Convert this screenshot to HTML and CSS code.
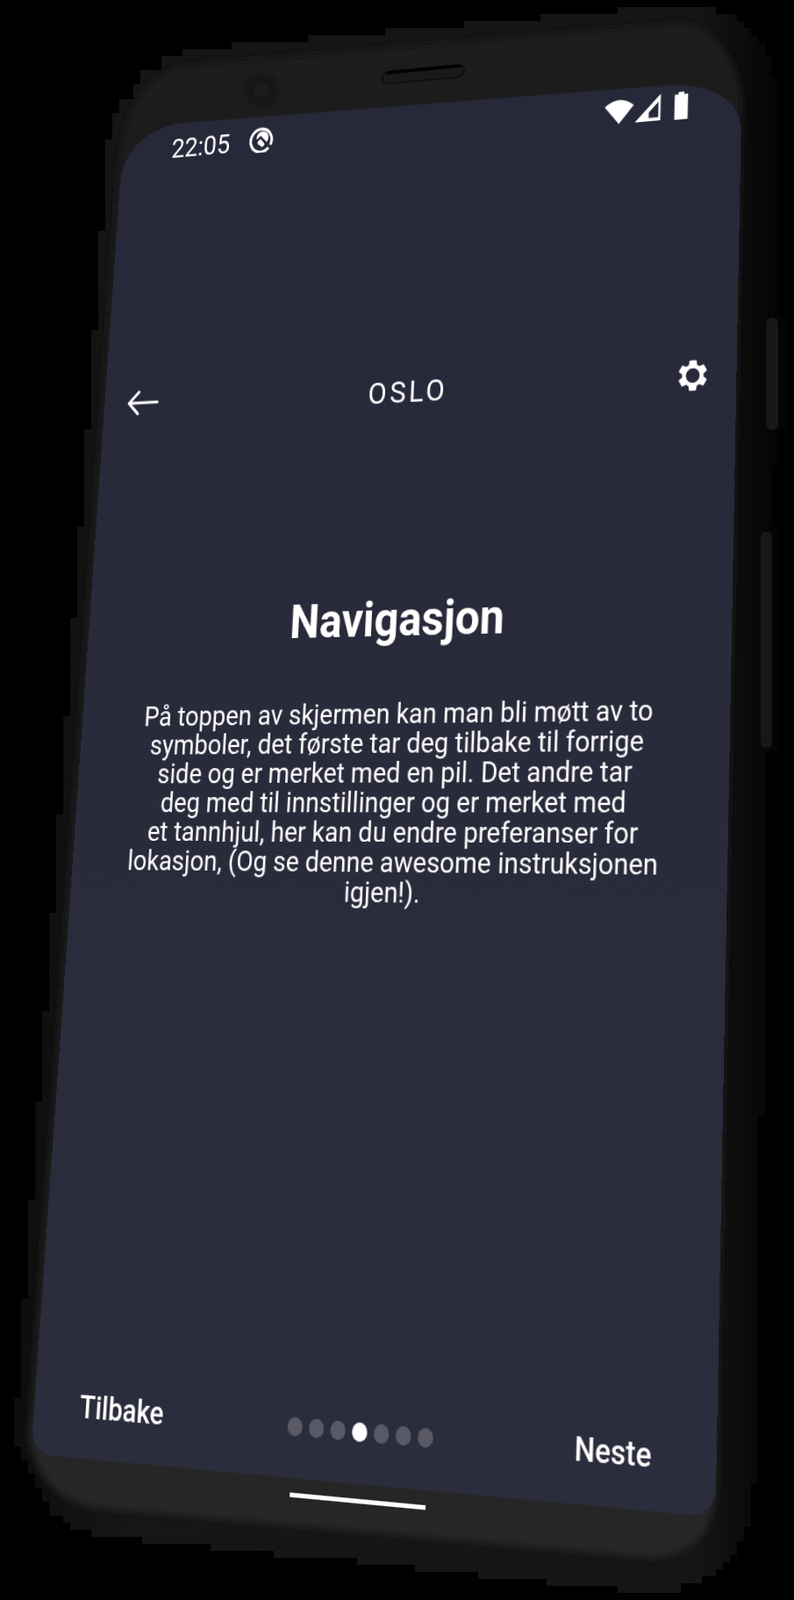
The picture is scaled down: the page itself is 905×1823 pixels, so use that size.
FILE: index.html
```html
<!DOCTYPE html>
<html lang="no">
<head>
    <meta charset="UTF-8">
    <meta name="viewport" content="width=device-width, initial-scale=1.0">
    <title>Oslo - Navigasjon</title>
    <link rel="stylesheet" href="styles.css">
</head>
<body>
    <div class="stage">
        <!-- phone body -->
        <svg class="phone" width="905" height="1823" viewBox="0 0 905 1823" aria-hidden="true">
            <defs>
                <linearGradient id="sideShade" gradientUnits="userSpaceOnUse" x1="0" y1="0" x2="905" y2="0">
                    <stop offset="0" stop-color="#0c0c0c"/>
                    <stop offset="0.16" stop-color="#161616"/>
                    <stop offset="0.88" stop-color="#151515"/>
                    <stop offset="0.98" stop-color="#040404"/>
                </linearGradient>
                <linearGradient id="faceShade" gradientUnits="userSpaceOnUse" x1="0" y1="0" x2="0" y2="1823">
                    <stop offset="0" stop-color="#1a1a1a"/>
                    <stop offset="0.6" stop-color="#1c1c1c"/>
                    <stop offset="1" stop-color="#282828"/>
                </linearGradient>
                <filter id="soft" x="-5%" y="-5%" width="110%" height="110%">
                    <feGaussianBlur stdDeviation="4"/>
                </filter>
                <filter id="softer" x="-30%" y="-30%" width="160%" height="160%">
                    <feGaussianBlur stdDeviation="1.5"/>
                </filter>
            </defs>
            <path fill="url(#sideShade)" d="M184 64H208V56H264V48H351V40H439V32H529V24H616V16H704V8H816V16H840V24H848V32H856V40H864V48H872V64H880V88H888V360H897V488H888V530H880V600H888V856H872V1271H864V1690H856V1740H848V1756H840V1772H832V1780H824V1788H816V1796H800V1804H776V1815H704V1807H623V1799H545V1791H473V1783H407V1775H312V1767H240V1759H162V1751H104V1743H80V1735H72V1727H56V1711H48V1695H40V1679H32V1664H24V1648H16V1593H24V1480H32V1367H40V1255H48V1152H56V1040H64V928H72V816H80V704H88V600H96V489H104V376H112V263H120V159H128V129H136V113H152V96H160V80H184Z"/>
            <path fill="url(#faceShade)" filter="url(#soft)" d="M134 210C140 125 160 92 208 75L767 27C802 25 832 45 846 110L816 1700C812 1750 790 1770 744 1775L110 1718C70 1712 45 1690 33 1640Z"/>
            <rect class="side-key" x="873" y="362" width="14" height="128" rx="7"/>
            <rect class="side-key" x="867" y="606" width="13" height="246" rx="6"/>
            <g filter="url(#softer)">
                <circle cx="298" cy="103" r="19" fill="#121212"/>
                <circle cx="298" cy="102" r="9" fill="#1c1c1c"/>
            </g>
            <path fill="#191919" stroke="#0d0d0d" stroke-width="1.5" d="M444 81L522 74C528 74 530 78 529 81C528 85 526 87 522 88L444 95C438 95 436 92 436 89C437 85 439 82 444 81Z"/>
            <path fill="none" stroke="#020202" stroke-width="3.5" stroke-linecap="round" d="M442 83L524 75"/>
        </svg>

        <!-- device screen, tilted with a matrix3d in styles.css -->
        <div class="screen">
            <div class="app">
                <div class="statusbar">
                    <span class="clock">22:05</span>
                    <svg class="q-icon" viewBox="0 0 24 24">
                        <path fill="none" stroke="#fff" stroke-width="2.6" d="M19.5 20A10.5 10.5 0 1 1 21.2 17.5"/>
                        <circle cx="13" cy="10.5" r="6" fill="#fff"/>
                        <path fill="none" stroke="#272839" stroke-width="2.2" d="M4.5 15.5L11 10L18 17"/>
                        <path fill="#fff" d="M8 15.5L11 12.5L15.5 17L13 19Z"/>
                    </svg>
                    <div class="status-icons">
                        <svg class="wifi" viewBox="0 0 24 24"><path fill="#fff" d="M12 22.5L0 8.5C7 2 17 2 24 8.5Z"/></svg>
                        <svg class="signal" viewBox="0 0 24 24"><path fill="#fff" fill-rule="evenodd" d="M24 0V24H0ZM22 7L13 16V21H22Z"/></svg>
                        <svg class="battery" viewBox="0 0 12 24"><path fill="#fff" d="M3.5 0H8.5V2H12V24H0V2H3.5Z"/></svg>
                    </div>
                </div>

                <div class="topbar">
                    <svg class="back" viewBox="0 0 38 28">
                        <path fill="none" stroke="#fff" stroke-width="3" stroke-linecap="round" stroke-linejoin="round" d="M36 14H3M14 3L3 14L14 25"/>
                    </svg>
                    <span class="city">OSLO</span>
                    <svg class="gear" viewBox="0 0 24 24">
                        <path fill="#fff" d="M19.14 12.94c.04-.3.06-.61.06-.94 0-.32-.02-.64-.07-.94l2.03-1.58c.18-.14.23-.41.12-.61l-1.92-3.32c-.12-.22-.37-.29-.59-.22l-2.39.96c-.5-.38-1.03-.7-1.62-.94l-.36-2.54c-.04-.24-.24-.41-.48-.41h-3.84c-.24 0-.43.17-.47.41l-.36 2.54c-.59.24-1.13.57-1.62.94l-2.39-.96c-.22-.08-.47 0-.59.22L2.74 8.87c-.12.21-.08.47.12.61l2.03 1.58c-.05.3-.09.63-.09.94s.02.64.07.94l-2.03 1.58c-.18.14-.23.41-.12.61l1.92 3.32c.12.22.37.29.59.22l2.39-.96c.5.38 1.03.7 1.62.94l.36 2.54c.05.24.24.41.48.41h3.84c.24 0 .44-.17.47-.41l.36-2.54c.59-.24 1.13-.56 1.62-.94l2.39.96c.22.08.47 0 .59-.22l1.92-3.32c.12-.22.07-.47-.12-.61l-2.01-1.58zM12 16.6c-2.54 0-4.6-2.06-4.6-4.6s2.06-4.6 4.6-4.6 4.6 2.06 4.6 4.6-2.06 4.6-4.6 4.6z"/>
                    </svg>
                </div>

                <section class="intro">
                    <h1>Navigasjon</h1>
                    <p>På toppen av skjermen kan man bli møtt av to<br>
                    symboler, det første tar deg tilbake til forrige<br>
                    side og er merket med en pil. Det andre tar<br>
                    deg med til innstillinger og er merket med<br>
                    et tannhjul, her kan du endre preferanser for<br>
                    lokasjon, (Og se denne awesome instruksjonen<br>
                    igjen!).</p>
                </section>

                <div class="pager">
                    <span class="pager-back">Tilbake</span>
                    <div class="dots">
                        <span class="dot"></span>
                        <span class="dot"></span>
                        <span class="dot"></span>
                        <span class="dot active"></span>
                        <span class="dot"></span>
                        <span class="dot"></span>
                        <span class="dot"></span>
                    </div>
                    <span class="pager-next">Neste</span>
                </div>
            </div>
            <div class="navbar"><span class="home-bar"></span></div>
        </div>
    </div>
</body>
</html>
```

FILE: styles.css
```css
body {
    margin: 0;
    padding: 0;
    background-color: #000;
    font-family: 'Roboto', 'Liberation Sans', sans-serif;
    color: #fff;
}

.stage {
    position: relative;
    width: 905px;
    height: 1823px;
    overflow: hidden;
}

.phone {
    position: absolute;
    left: 0;
    top: 0;
}

.side-key {
    fill: #171717;
}

/* 720 x 1340 logical screen mapped onto the tilted quad of the phone */
.screen {
    position: absolute;
    left: 0;
    top: 0;
    width: 720px;
    transform-origin: 0 0;
    transform: matrix3d(0.88521, -0.10240, 0, -0.00011144, -0.08097, 0.99434, 0, -0.00007388, 0, 0, 1, 0, 140.4, 160, 0, 1);
}

/* top of the glass sits a bit higher on the left than the box */
.screen::before {
    content: "";
    position: absolute;
    left: 0;
    top: -20px;
    width: 720px;
    height: 100px;
    background-color: #272839;
    clip-path: path("M0 72C0 30 30 10 70 6.5L640 15.7C690 18 720 40 720 72V100H0Z");
}

.app {
    position: relative;
    height: 1340px;
    display: flex;
    flex-direction: column;
    background: linear-gradient(180deg, #272839, #2b2d3d);
    border-radius: 80px 80px 24px 24px;
}

.statusbar {
    display: flex;
    align-items: center;
    height: 32px;
    padding: 0 56px 0 62px;
}

.clock {
    margin-top: -3px;
    font-size: 29px;
    font-weight: 400;
}

.q-icon {
    width: 29px;
    height: 29px;
    margin-left: 24px;
    margin-top: -5px;
}

.status-icons {
    display: flex;
    align-items: center;
    margin-left: auto;
}

.wifi {
    width: 34px;
    height: 32px;
    margin-top: 3px;
}

.signal {
    width: 29px;
    height: 28px;
    margin-top: 3px;
}

.battery {
    width: 18px;
    height: 29px;
    margin-left: 13px;
    margin-top: 4px;
}

.topbar {
    display: flex;
    align-items: center;
    justify-content: space-between;
    height: 60px;
    margin-top: 235px;
    padding: 0 27px 0 27px;
}

.back {
    width: 40px;
    height: 30px;
    margin-top: -8px;
}

.city {
    font-size: 31px;
    font-weight: 400;
    letter-spacing: 3.5px;
}

.gear {
    width: 38px;
    height: 38px;
}

.intro {
    margin-top: 173px;
    text-align: center;
}

.intro h1 {
    margin: 0;
    padding-right: 2px;
    font-size: 48px;
    font-weight: 700;
    line-height: 60px;
}

.intro p {
    margin: 49px 0 0;
    padding-right: 5px;
    font-size: 28px;
    line-height: 29px;
}

.pager {
    display: grid;
    grid-template-columns: 1fr auto 1fr;
    align-items: center;
    height: 50px;
    margin-top: auto;
    margin-bottom: 22px;
    padding: 0 52px;
    font-size: 29px;
    font-weight: 500;
}

.pager-next {
    justify-self: end;
    margin-right: 11px;
}

.dots {
    display: flex;
    gap: 7px;
    margin-top: 3px;
}

.dot {
    width: 16px;
    height: 17px;
    border-radius: 50%;
    background-color: #595a66;
}

.dot.active {
    background-color: #fff;
}

.navbar {
    display: flex;
    justify-content: center;
    align-items: center;
    height: 30px;
}

.home-bar {
    width: 143px;
    height: 4px;
    background-color: #fff;
}
```
